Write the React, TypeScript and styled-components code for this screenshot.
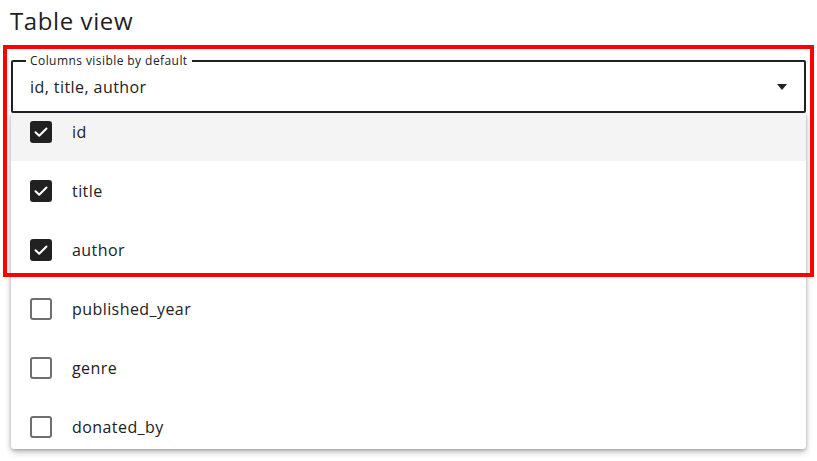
import styled, { createGlobalStyle } from "styled-components"

const GlobalStyle = createGlobalStyle`
    html, body {
        margin: 0;
        padding: 0;
        background: #fff;
    }
    body {
        font-family: "Open Sans", "Noto Sans", sans-serif;
        color: #212121;
        letter-spacing: 0.43px;
    }
`

const Page = styled.div`
    position: relative;
    width: 817px;
    height: 461px;
    overflow: hidden;
    box-sizing: border-box;
    padding-top: 5px;
`

const Title = styled.h2`
    margin: 0 0 23px 10px;
    font-size: 24px;
    line-height: 32px;
    font-weight: 400;
    letter-spacing: 0.6px;
    color: #1f1f1f;
`

const SelectBox = styled.div`
    position: relative;
    margin: 0 11px;
    height: 53px;
    box-sizing: border-box;
    border: 2px solid #212121;
    border-radius: 2px;
    display: flex;
    align-items: center;
    justify-content: space-between;
    padding: 0 17px;
    font-size: 16px;
    z-index: 2;
    background: #fff;
`

const FloatLabel = styled.span`
    position: absolute;
    left: 13px;
    top: -8px;
    padding: 0 4px;
    background: #fff;
    font-size: 12px;
    line-height: 14px;
`

const Arrow = styled.span`
    width: 0;
    height: 0;
    border-left: 5.5px solid transparent;
    border-right: 5.5px solid transparent;
    border-top: 6px solid #212121;
    margin-top: 1px;
`

const Menu = styled.div`
    margin: 0 11px;
    height: 336px;
    overflow: hidden;
    background: #fff;
    border-radius: 0 0 4px 4px;
    box-shadow: 0 3px 6px rgba(0, 0, 0, 0.28), 0 1px 3px rgba(0, 0, 0, 0.18);
`

const List = styled.ul`
    list-style: none;
    margin: -11px 0 0;
    padding: 0;
`

const Row = styled.li<{ $active?: boolean }>`
    height: 59px;
    display: flex;
    align-items: center;
    gap: 20px;
    padding-left: 19px;
    background: ${p => (p.$active ? "#f4f4f4" : "#fff")};
    font-size: 16px;
`

const Box = styled.span<{ $checked?: boolean }>`
    width: 22px;
    height: 22px;
    box-sizing: border-box;
    border-radius: 3px;
    display: flex;
    align-items: center;
    justify-content: center;
    background: ${p => (p.$checked ? "#212121" : "#fff")};
    border: ${p => (p.$checked ? "none" : "2px solid #6f6f6f")};
`

const Highlight = styled.div`
    position: absolute;
    left: 3px;
    top: 45px;
    width: 811px;
    height: 232px;
    box-sizing: border-box;
    border: 4px solid #ff0000;
    pointer-events: none;
    z-index: 5;
`

const columns = [
    { name: "id", checked: true },
    { name: "title", checked: true },
    { name: "author", checked: true },
    { name: "published_year", checked: false },
    { name: "genre", checked: false },
    { name: "donated_by", checked: false },
]

function Check({ checked }: { checked: boolean }) {
    return (
        <Box $checked={checked}>
            {checked && (
                <svg width="22" height="22" viewBox="0 0 22 22">
                    <path d="M5.5 11.2 L9.2 14.8 L16.5 7.5" fill="none" stroke="#fff" strokeWidth="2" strokeLinecap="round" strokeLinejoin="round" />
                </svg>
            )}
        </Box>
    )
}

export default function App() {
    const selected = columns.filter(c => c.checked).map(c => c.name).join(", ")
    return (
        <>
            <GlobalStyle />
            <Page>
                <Title>Table view</Title>
                <SelectBox>
                    <FloatLabel>Columns visible by default</FloatLabel>
                    <span>{selected}</span>
                    <Arrow />
                </SelectBox>
                <Menu>
                    <List>
                        {columns.map((c, i) => (
                            <Row key={c.name} $active={i === 0}>
                                <Check checked={c.checked} />
                                {c.name}
                            </Row>
                        ))}
                    </List>
                </Menu>
                <Highlight />
            </Page>
        </>
    )
}
